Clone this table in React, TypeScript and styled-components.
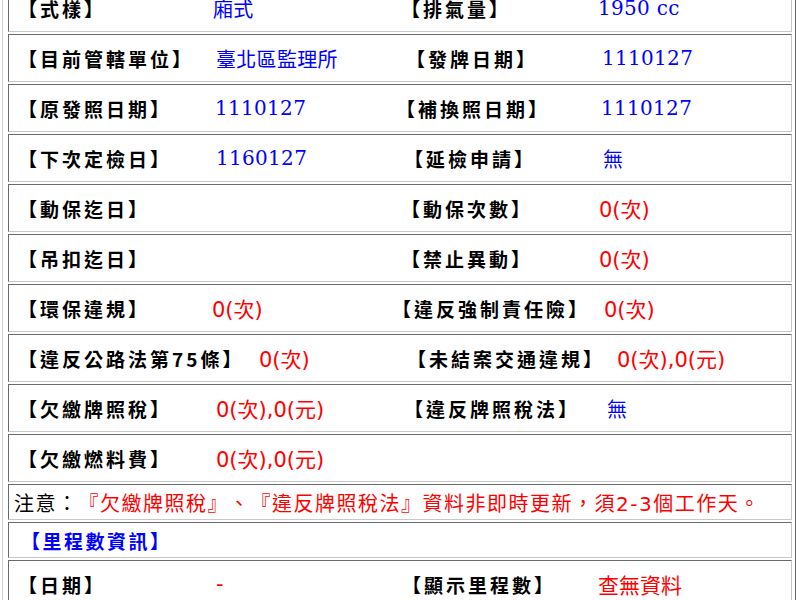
import React from "react";
import styled, { createGlobalStyle } from "styled-components";

const Global = createGlobalStyle`
  html, body { margin: 0; padding: 0; background: #fff; overflow: hidden; }
  body { font-family: "Noto Sans CJK TC", sans-serif; text-spacing-trim: space-all; }
`;

const Frame = styled.div`
  box-sizing: border-box;
  width: 794px;
  margin: -19px 0 0 2px;
  padding: 2px 3px 2px 5px;
  border: 1px solid;
  border-color: #cfcfcf #6a6a6a #6a6a6a #cfcfcf;
  display: flex;
  flex-direction: column;
  gap: 2px;
`;

const Box = styled.div<{ $h?: number; $pad?: number }>`
  box-sizing: border-box;
  height: ${(p) => p.$h ?? 48}px;
  border: 1px solid;
  border-color: #6a6a6a #c8c8c8 #c8c8c8 #6a6a6a;
  display: flex;
  align-items: center;
  padding-left: ${(p) => p.$pad ?? 9}px;
`;

const Grid = styled.div<{ $cols: string }>`
  display: grid;
  grid-template-columns: ${(p) => p.$cols};
  align-items: center;
  width: 100%;
`;

const Label = styled.span<{ $color?: string; $ls?: number }>`
  font-family: "Noto Sans CJK TC", sans-serif;
  font-weight: 700;
  font-size: 19px;
  letter-spacing: ${(p) => p.$ls ?? 3}px;
  color: ${(p) => p.$color ?? "#000"};
  white-space: nowrap;
`;

const BlueValue = styled.span`
  font-family: "DejaVu Serif", "Noto Sans CJK TC", serif;
  font-size: 20px;
  letter-spacing: 0.3px;
  color: #0000ff;
  white-space: nowrap;
`;

const RedValue = styled.span`
  font-family: "DejaVu Sans", "Noto Sans CJK TC", sans-serif;
  font-size: 21px;
  color: #ff0000;
  white-space: nowrap;
`;

const Note = styled.div`
  font-family: "DejaVu Sans", "Noto Sans CJK TC", sans-serif;
  font-size: 20px;
  letter-spacing: 1.5px;
  color: #ff0000;
  white-space: nowrap;
`;

const NoteLead = styled.span`
  color: #000;
`;

type Val = { t: string; c: "blue" | "red" } | null;

type RowData = {
  l: string;
  v1: Val;
  r?: string;
  v2?: Val;
  cols: [number, number, number];
};

const rows: RowData[] = [
  { l: "【式樣】", v1: { t: "廂式", c: "blue" }, r: "【排氣量】", v2: { t: "1950 cc", c: "blue" }, cols: [213, 401, 598] },
  { l: "【目前管轄單位】", v1: { t: "臺北區監理所", c: "blue" }, r: "【發牌日期】", v2: { t: "1110127", c: "blue" }, cols: [216, 406, 602] },
  { l: "【原發照日期】", v1: { t: "1110127", c: "blue" }, r: "【補換照日期】", v2: { t: "1110127", c: "blue" }, cols: [215, 396, 601] },
  { l: "【下次定檢日】", v1: { t: "1160127", c: "blue" }, r: "【延檢申請】", v2: { t: "無", c: "blue" }, cols: [216, 404, 603] },
  { l: "【動保迄日】", v1: null, r: "【動保次數】", v2: { t: "0(次)", c: "red" }, cols: [216, 401, 599] },
  { l: "【吊扣迄日】", v1: null, r: "【禁止異動】", v2: { t: "0(次)", c: "red" }, cols: [216, 401, 599] },
  { l: "【環保違規】", v1: { t: "0(次)", c: "red" }, r: "【違反強制責任險】", v2: { t: "0(次)", c: "red" }, cols: [212, 392, 604] },
  { l: "【違反公路法第75條】", v1: { t: "0(次)", c: "red" }, r: "【未結案交通違規】", v2: { t: "0(次),0(元)", c: "red" }, cols: [259, 407, 617] },
  { l: "【欠繳牌照稅】", v1: { t: "0(次),0(元)", c: "red" }, r: "【違反牌照稅法】", v2: { t: "無", c: "blue" }, cols: [216, 404, 607] },
  { l: "【欠繳燃料費】", v1: { t: "0(次),0(元)", c: "red" }, cols: [216, 404, 607] },
];

const lastRow: RowData = {
  l: "【日期】",
  v1: { t: "-", c: "red" },
  r: "【顯示里程數】",
  v2: { t: "查無資料", c: "red" },
  cols: [216, 402, 598],
};

const ValueText = ({ v }: { v: Val | undefined }) => {
  if (!v) return <span />;
  return v.c === "blue" ? <BlueValue>{v.t}</BlueValue> : <RedValue>{v.t}</RedValue>;
};

const INNER = 18;

const InfoRow = ({ d }: { d: RowData }) => {
  const [v1, r, v2] = d.cols;
  const cols = `${v1 - INNER}px ${r - v1}px ${v2 - r}px 1fr`;
  return (
    <Box>
      <Grid $cols={cols}>
        <Label>{d.l}</Label>
        <ValueText v={d.v1} />
        {d.r ? <Label>{d.r}</Label> : <span />}
        <ValueText v={d.v2} />
      </Grid>
    </Box>
  );
};

export default function App() {
  return (
    <>
      <Global />
      <Frame>
        {rows.map((d, i) => (
          <InfoRow key={i} d={d} />
        ))}
        <Box $h={36} $pad={5}>
          <Note>
            <NoteLead>注意：</NoteLead>『欠繳牌照稅』、『違反牌照稅法』資料非即時更新，須2-3個工作天。
          </Note>
        </Box>
        <Box $h={36} $pad={12}>
          <Label $color="#0000ff" $ls={2.5}>【里程數資訊】</Label>
        </Box>
        <InfoRow d={lastRow} />
      </Frame>
    </>
  );
}
